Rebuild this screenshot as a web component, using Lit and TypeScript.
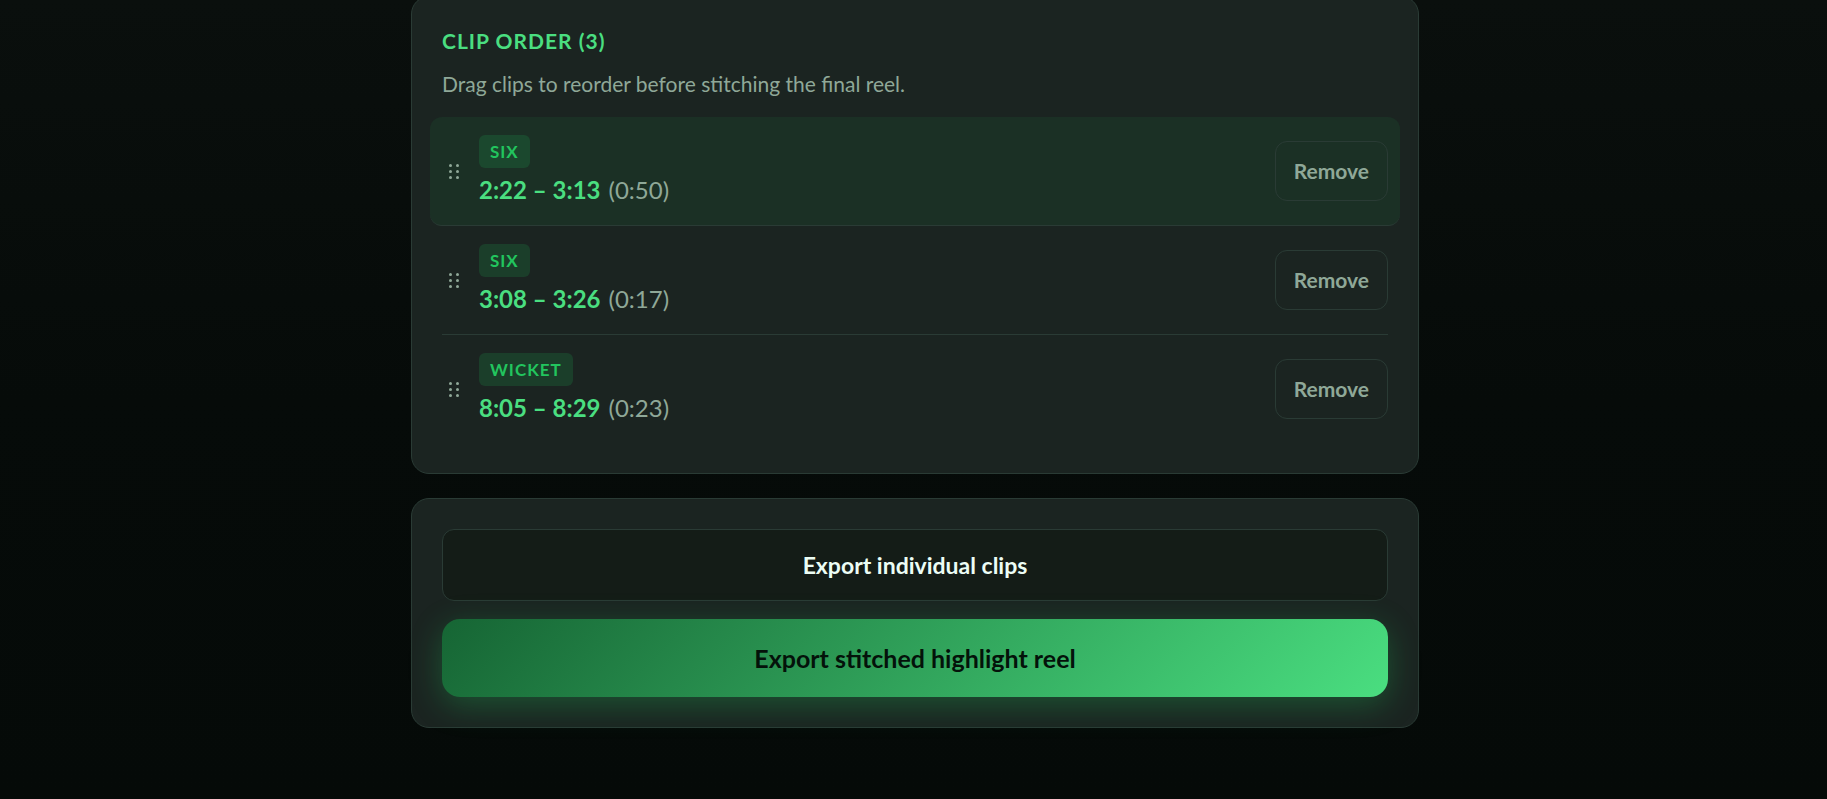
import { LitElement, html, css, svg } from "lit";
import { customElement, state } from "lit/decorators.js";
import { repeat } from "lit/directives/repeat.js";
import { classMap } from "lit/directives/class-map.js";

interface Clip {
  id: number;
  kind: string;
  start: string;
  end: string;
  length: string;
}

@customElement("app-root")
export class AppRoot extends LitElement {
  static styles = css`
    :host {
      display: block;
      box-sizing: border-box;
      min-height: 100vh;
      padding: 0 22px 0 25px;
      overflow: hidden;
      background: linear-gradient(180deg, #0a0f0d 0%, #060b09 50%, #050a08 100%);
      color: #ecfdf5;
      font-family: Lato, "Open Sans", sans-serif;
      font-size: 21px;
      line-height: 32px;
    }

    *,
    *::before {
      box-sizing: border-box;
    }

    .page {
      display: flex;
      flex-direction: column;
      gap: 24px;
      max-width: 1008px;
      margin: -4px auto 0;
      padding-bottom: 70px;
    }

    .card {
      padding: 30px;
      border: 1px solid #2a3b35;
      border-radius: 18px;
      background: #1b2421;
    }

    .title {
      margin: 0 0 13px;
      color: #4ade80;
      font-size: 21px;
      font-weight: 700;
      line-height: 28px;
      letter-spacing: 1px;
      text-transform: uppercase;
    }

    .hint {
      margin: 0 0 17px;
      color: #8fa898;
    }

    .list {
      margin: 0;
      padding: 0;
      list-style: none;
    }

    .row {
      display: flex;
      align-items: center;
      gap: 12px;
      padding: 18px 0;
      border-bottom: 1px solid #2a3b35;
    }

    .row:last-child {
      border-bottom: 0;
    }

    .row.active {
      margin: 0 -12px;
      padding: 18px 12px;
      border-radius: 12px;
      background: #1b3025;
    }

    .handle {
      display: flex;
      padding: 6px;
      color: #8fa898;
      cursor: grab;
    }

    .info {
      display: flex;
      flex: 1;
      flex-direction: column;
      align-items: flex-start;
      gap: 4px;
      min-width: 0;
    }

    .badge {
      padding: 0 11px;
      border-radius: 6px;
      background: rgba(34, 197, 94, 0.16);
      color: #22c55e;
      font-size: 17px;
      font-weight: 700;
      line-height: 33px;
      letter-spacing: 1px;
      text-transform: uppercase;
    }

    .time {
      display: flex;
      gap: 8px;
      font-size: 24px;
      line-height: 35px;
    }

    .range {
      color: #4ade80;
      font-weight: 700;
    }

    .length {
      color: #8fa898;
    }

    button {
      border: 1px solid #2a3b35;
      border-radius: 12px;
      background: transparent;
      font-family: inherit;
      font-weight: 700;
      cursor: pointer;
    }

    .remove {
      padding: 13px 18px;
      color: #8fa898;
      font-size: 21px;
      line-height: 32px;
    }

    .actions {
      display: flex;
      flex-direction: column;
      gap: 18px;
    }

    .secondary {
      padding: 18px 24px;
      background: #141c17;
      color: #ecfdf5;
      font-size: 23px;
      line-height: 34px;
    }

    .primary {
      padding: 22px 24px;
      border: 0;
      border-radius: 18px;
      background: linear-gradient(135deg, #166534, #4ade80);
      box-shadow: 0 8px 32px rgba(34, 197, 94, 0.3);
      color: #04120a;
      font-size: 25px;
      line-height: 34px;
    }
  `;

  @state() private clips: Clip[] = [
    { id: 1, kind: "Six", start: "2:22", end: "3:13", length: "0:50" },
    { id: 2, kind: "Six", start: "3:08", end: "3:26", length: "0:17" },
    { id: 3, kind: "Wicket", start: "8:05", end: "8:29", length: "0:23" },
  ];

  @state() private activeId = 1;

  private dragged?: number;

  private remove(id: number) {
    this.clips = this.clips.filter((c) => c.id !== id);
  }

  private dropOn(target: number) {
    const from = this.clips.findIndex((c) => c.id === this.dragged);
    const to = this.clips.findIndex((c) => c.id === target);
    if (from < 0 || to < 0) return;
    const next = [...this.clips];
    next.splice(to, 0, ...next.splice(from, 1));
    this.clips = next;
  }

  private grip() {
    const dots = [2, 8, 14].flatMap((y) =>
      [3, 10].map((x) => svg`<circle cx=${x - 0.5} cy=${y + 0.5} r="1.5" />`)
    );
    return html`<svg width="13" height="16" viewBox="0 0 13 16" fill="currentColor" aria-hidden="true">${dots}</svg>`;
  }

  private row(clip: Clip) {
    return html`
      <li
        class=${classMap({ row: true, active: clip.id === this.activeId })}
        draggable="true"
        @click=${() => (this.activeId = clip.id)}
        @dragstart=${() => (this.dragged = clip.id)}
        @dragover=${(e: DragEvent) => e.preventDefault()}
        @drop=${() => this.dropOn(clip.id)}
      >
        <span class="handle">${this.grip()}</span>
        <div class="info">
          <span class="badge">${clip.kind}</span>
          <div class="time">
            <span class="range">${clip.start} – ${clip.end}</span>
            <span class="length">(${clip.length})</span>
          </div>
        </div>
        <button class="remove" type="button" @click=${() => this.remove(clip.id)}>Remove</button>
      </li>
    `;
  }

  render() {
    return html`
      <main class="page">
        <section class="card">
          <h2 class="title">Clip order (${this.clips.length})</h2>
          <p class="hint">Drag clips to reorder before stitching the final reel.</p>
          <ul class="list">
            ${repeat(this.clips, (c) => c.id, (c) => this.row(c))}
          </ul>
        </section>
        <section class="card actions">
          <button class="secondary" type="button">Export individual clips</button>
          <button class="primary" type="button">Export stitched highlight reel</button>
        </section>
      </main>
    `;
  }
}
